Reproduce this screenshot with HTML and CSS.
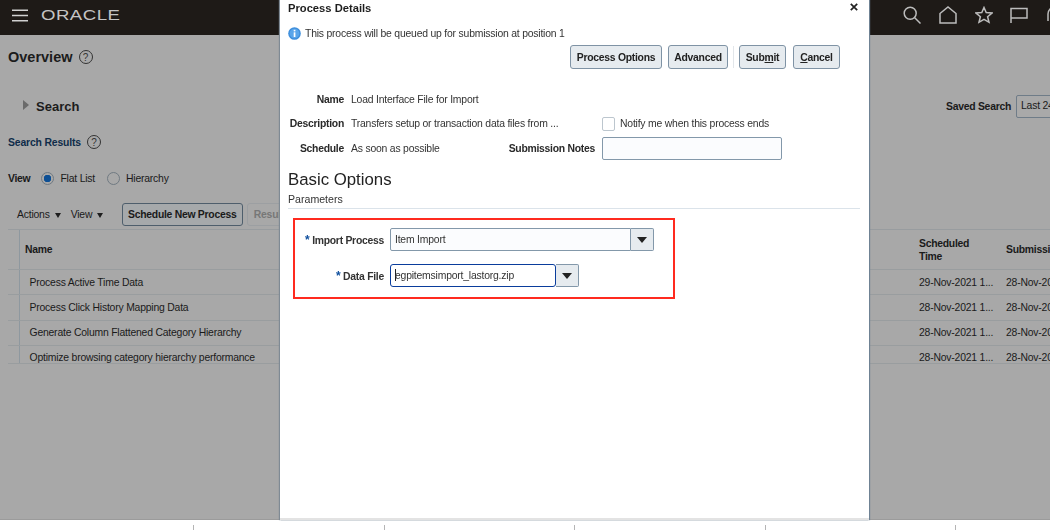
FILE: index.html
```html
<!DOCTYPE html>
<html lang="en">
<head>
<meta charset="utf-8">
<title>Process Details</title>
<link rel="stylesheet" href="styles.css">
</head>
<body>
<div class="page">
  <header class="topbar">
    <div class="brand">
      <svg class="burger" width="16" height="13" viewBox="0 0 16 13"><path d="M0 1.200h16M0 6.500h16M0 11.800h16" stroke="#d0d0d0" stroke-width="1.600"/></svg>
      <span class="logo">ORACLE</span>
    </div>
    <div class="tools">
      <svg width="18" height="18" viewBox="0 0 18 18" fill="none" stroke="#bcbcbc" stroke-width="1.500"><circle cx="7.200" cy="7.200" r="6"/><path d="M11.500 11.500l6 6"/></svg>
      <svg width="18" height="18" viewBox="0 0 18 18" fill="none" stroke="#bcbcbc" stroke-width="1.500"><path d="M1 7.500L9 1l8 6.500V17H1z"/></svg>
      <svg width="18" height="18" viewBox="0 0 18 18" fill="none" stroke="#bcbcbc" stroke-width="1.500"><path d="M9 1.500l2.200 5 5.800.5-4.400 3.700 1.400 5.600L9 13.300l-5 3 1.400-5.600L1 7l5.800-.5z"/></svg>
      <svg width="18" height="18" viewBox="0 0 18 18" fill="none" stroke="#bcbcbc" stroke-width="1.500"><path d="M1 17V2.500h16v9.500H1"/></svg>
      <svg width="18" height="18" viewBox="0 0 18 18" fill="none" stroke="#bcbcbc" stroke-width="1.500"><path d="M2 15V8a7 7 0 0 1 14 0v7"/></svg>
    </div>
  </header>
  <main class="backdrop">
    <div class="title-row"><h1>Overview</h1><span class="help">?</span></div>
    <div class="search-row">
      <div class="search-left"><span class="tri"></span><h2>Search</h2></div>
      <div class="saved"><b>Saved Search</b><span class="saved-box">Last 24 Hours</span></div>
    </div>
    <div class="results-row"><h3>Search Results</h3><span class="help">?</span></div>
    <div class="view-row">
      <b>View</b>
      <span class="radio on"></span><span>Flat List</span>
      <span class="radio second"></span><span>Hierarchy</span>
    </div>
    <div class="toolbar">
      <span>Actions</span><span class="caret"></span>
      <span class="tool-gap">View</span><span class="caret"></span>
      <span class="btn-primary">Schedule New Process</span>
      <span class="btn-muted">Resubmit</span>
    </div>
    <div class="table">
      <div class="tr head"><div class="c0"></div><div class="c1">Name</div><div class="c2">Scheduled Time</div><div class="c3">Submission Time</div></div>
      <div class="tr"><div class="c0"></div><div class="c1">Process Active Time Data</div><div class="c2">29-Nov-2021 1...</div><div class="c3">28-Nov-2021 1...</div></div>
      <div class="tr"><div class="c0"></div><div class="c1">Process Click History Mapping Data</div><div class="c2">28-Nov-2021 1...</div><div class="c3">28-Nov-2021 1...</div></div>
      <div class="tr"><div class="c0"></div><div class="c1">Generate Column Flattened Category Hierarchy</div><div class="c2">28-Nov-2021 1...</div><div class="c3">28-Nov-2021 1...</div></div>
      <div class="tr last"><div class="c0"></div><div class="c1">Optimize browsing category hierarchy performance</div><div class="c2">28-Nov-2021 1...</div><div class="c3">28-Nov-2021 1...</div></div>
    </div>
  </main>
  <footer class="ticks"><i></i><i></i><i></i><i></i><i></i></footer>

  <section class="dialog">
    <div class="dlg-head"><h2>Process Details</h2>
      <svg class="close" width="8" height="8" viewBox="0 0 8 8"><path d="M.8.8l6.400 6.400M7.200.8L.8 7.200" stroke="#222" stroke-width="1.700"/></svg>
    </div>
    <div class="info">
      <svg width="13" height="13" viewBox="0 0 13 13"><circle cx="6.500" cy="6.500" r="6.300" fill="#3f8fdc"/><circle cx="6.500" cy="6.500" r="4.800" fill="#5aa5ea"/><rect x="5.700" y="5.300" width="1.700" height="4.700" fill="#fff"/><rect x="5.700" y="2.800" width="1.700" height="1.600" fill="#fff"/></svg>
      <span>This process will be queued up for submission at position 1</span>
    </div>
    <div class="actions">
      <span class="btn">Process Options</span>
      <span class="btn adv">Advanced</span>
      <span class="sep"></span>
      <span class="btn sub">Sub<u>m</u>it</span>
      <span class="btn can"><u>C</u>ancel</span>
    </div>
    <div class="form">
      <label class="lab">Name</label><span class="val">Load Interface File for Import</span><span></span><span></span>
      <label class="lab">Description</label><span class="val">Transfers setup or transaction data files from ...</span><span></span>
      <span class="notify"><span class="check"></span>Notify me when this process ends</span>
      <label class="lab">Schedule</label><span class="val">As soon as possible</span><label class="lab">Submission Notes</label><span class="note-box"></span>
    </div>
    <h2 class="basic">Basic Options</h2>
    <div class="params">Parameters</div>
    <div class="redbox">
      <div class="param">
        <label class="plab"><span class="star">*</span> Import Process</label>
        <span class="combo wide"><span class="field">Item Import</span><span class="drop"></span></span>
      </div>
      <div class="param">
        <label class="plab"><span class="star">*</span> Data File</label>
        <span class="combo"><span class="field focus">egpitemsimport_lastorg.zip</span><span class="drop"></span></span>
      </div>
    </div>
  </section>
</div>
</body>
</html>
```
FILE: styles.css
```css
* { box-sizing: border-box; }
html, body { margin: 0; padding: 0; }
body { width: 1050px; height: 530px; overflow: hidden; background: #fff; font-family: "Liberation Sans", Arial, sans-serif; font-size: 10.4px; letter-spacing: -0.2px; color: #222; }
.page { position: relative; width: 1050px; height: 530px; overflow: hidden; filter: blur(0.25px); }
h1, h2, h3 { margin: 0; }
b, .lab, .plab, .btn, .btn-primary, .tr.head { letter-spacing: -0.27px; }

.topbar { height: 35px; background: #1e1a17; display: flex; justify-content: space-between; align-items: center; padding: 0 0 5px 12px; }
.brand { display: flex; align-items: center; gap: 13px; }
.logo { color: #c4c4c4; font-size: 15.5px; letter-spacing: 0.4px; transform: scaleX(1.2); transform-origin: left; }
.tools { display: flex; gap: 17.7px; margin-right: -14px; align-items: center; }
.tools svg { display: block; }

.backdrop { height: 485px; background: #a8a8a8; border-bottom: 1px solid #9b9b9b; padding: 0 0 0 8px; overflow: hidden; color: #1a1a1a; }
.title-row { display: flex; align-items: center; gap: 6px; height: 22px; margin-top: 11px; }
.title-row h1 { font-size: 14.5px; letter-spacing: 0; color: #1c1c1c; }
.help { width: 14px; height: 14px; border: 1px solid #333; border-radius: 50%; font-size: 10px; letter-spacing: 0; display: flex; align-items: center; justify-content: center; color: #333; }
.search-row { display: flex; justify-content: space-between; align-items: center; height: 24px; margin-top: 26px; }
.search-left { display: flex; align-items: center; gap: 7px; padding-left: 15px; }
.tri { width: 0; height: 0; border-left: 6px solid #6a6a6a; border-top: 5.5px solid transparent; border-bottom: 5.5px solid transparent; margin-top: -3px; }
.search-left h2 { font-size: 13px; letter-spacing: 0; color: #1c1c1c; }
.saved { display: flex; align-items: center; gap: 5px; margin-right: -52px; }
.saved-box { width: 86px; height: 23px; border: 1px solid #6f7c88; border-radius: 2px; background: #a9a9a9; padding: 4px; white-space: nowrap; overflow: hidden; }
.results-row { display: flex; align-items: center; gap: 6px; height: 18px; margin-top: 15px; }
.results-row h3 { font-size: 10.4px; color: #0f2c4a; letter-spacing: -0.15px; }
.view-row { display: flex; align-items: center; height: 16px; margin-top: 19px; }
.radio { width: 13px; height: 13px; border-radius: 50%; border: 1px solid #707a82; margin: 0 6px 0 11px; background: #a8a8a8; flex: none; }
.radio.on { background: radial-gradient(circle, #0d4f94 0 3.5px, #a8a8a8 4px); }
.radio.second { margin-left: 12px; }
.toolbar { display: flex; align-items: center; height: 23px; margin-top: 17px; padding-left: 9px; white-space: nowrap; }
.caret { width: 0; height: 0; border-top: 5px solid #1e1e1e; border-left: 3.5px solid transparent; border-right: 3.5px solid transparent; margin-left: 5px; margin-top: 2px; }
.tool-gap { margin-left: 10px; }
.btn-primary { margin-left: 18.5px; height: 23px; width: 121px; border: 1px solid #4e5e6c; border-radius: 3px; background: #a6a9ab; font-weight: bold; display: flex; align-items: center; justify-content: center; }
.btn-muted { margin-left: 4px; height: 23px; width: 60px; border: 1px solid #9c9fa2; border-radius: 3px; color: #777; font-weight: bold; padding: 5px 6px; }

.table { margin-top: 3px; width: 1100px; border-top: 1px solid #989c9f; }
.tr { display: grid; grid-template-columns: 12px 899px 87px 100px; height: 25.4px; border-bottom: 1px solid #999d9f; align-items: center; white-space: nowrap; }
.tr.head { height: 40px; font-weight: bold; }
.tr.last { height: 18px; align-items: start; }
.tr.last .c1, .tr.last .c2, .tr.last .c3 { padding-top: 6px; }
.c0 { align-self: stretch; border-right: 1px solid #8e989f; }
.c1 { padding-left: 9.5px; }
.head .c1 { padding-left: 5px; }
.head .c2 { white-space: normal; width: 60px; line-height: 13px; }

.ticks { height: 10px; display: flex; padding: 5px 0 0 193px; gap: 189.5px; }
.ticks i { width: 1px; height: 5px; background: #b5b5b5; display: block; }

.dialog { position: absolute; left: 280px; top: 0; width: 589px; height: 520px; background: #fff; border-bottom: 2px solid #e3e3e3; box-shadow: -1px 0 1px #7f8a94, 1px 0 1px #6f8294; padding: 0 8px; }
.dlg-head { display: flex; justify-content: space-between; height: 16px; align-items: center; padding-right: 3px; }
.dlg-head h2 { font-size: 11.2px; letter-spacing: 0; color: #1e1e1e; }
.close { display: block; margin-top: -3px; }
.info { display: flex; align-items: center; gap: 4px; height: 14px; margin-top: 10px; color: #333; }
.actions { display: flex; align-items: center; justify-content: flex-end; height: 24px; margin-top: 5px; padding-right: 21px; }
.btn { width: 92px; height: 24px; border: 1px solid #7f93a5; border-radius: 3px; background: #e6ebef; font-weight: bold; display: flex; align-items: center; justify-content: center; color: #222; }
.btn.adv { width: 60px; margin-left: 6px; }
.sep { width: 1px; height: 22px; background: #e2e6ea; margin: 0 5px; }
.btn.sub { width: 47px; }
.btn.can { width: 47px; margin-left: 7px; }
.form { display: grid; grid-template-columns: 56px 150px 87px 1fr; grid-template-rows: 24.5px 24.5px 24.5px; margin-top: 18px; column-gap: 7px; align-items: center; color: #333; white-space: nowrap; }
.lab { font-weight: bold; text-align: right; color: #2a2a2a; }
.note-box { width: 180px; height: 23px; border: 1px solid #8398aa; border-radius: 2px; background: #fbfcfe; }
.notify { display: flex; align-items: center; gap: 5px; }
.check { width: 13px; height: 14px; border: 1px solid #bcc6ce; border-radius: 2px; background: #fff; }
.basic { font-size: 16.8px; font-weight: normal; letter-spacing: 0; margin-top: 9px; line-height: 20px; color: #222; }
.params { font-size: 10.6px; letter-spacing: 0; height: 19px; padding-top: 3px; border-bottom: 1px solid #dbe3ea; width: 572px; color: #333; }
.redbox { width: 382px; height: 81px; border: 2px solid #ff2a1f; margin: 9px 0 0 5px; padding: 8px 0 0; }
.param { display: flex; align-items: center; height: 24px; margin-bottom: 12px; }
.plab { width: 89px; text-align: right; font-weight: bold; color: #333; white-space: nowrap; }
.star { color: #0f4f9e; font-size: 12px; }
.combo { display: flex; margin-left: 6px; height: 23px; width: 189px; }
.combo.wide { width: 264px; }
.field { flex: 1; height: 23px; border: 1px solid #8398aa; border-radius: 2px 0 0 2px; background: #fbfcfe; padding: 5px 4px 0; color: #333; }
.field.focus { border: 1.5px solid #0a3d9c; border-radius: 3px; background: #fff; padding-top: 3.5px; }
.field.focus::before { content: ""; display: inline-block; width: 1px; height: 12px; margin-right: -1px; background: #222; vertical-align: -2px; }
.drop { width: 23px; height: 23px; border: 1px solid #8398aa; border-left: 0; border-radius: 0 2px 2px 0; background: #e6ebef; position: relative; }
.drop::after { content: ""; position: absolute; left: 6px; top: 8px; border-top: 6px solid #222; border-left: 5px solid transparent; border-right: 5px solid transparent; }
```
